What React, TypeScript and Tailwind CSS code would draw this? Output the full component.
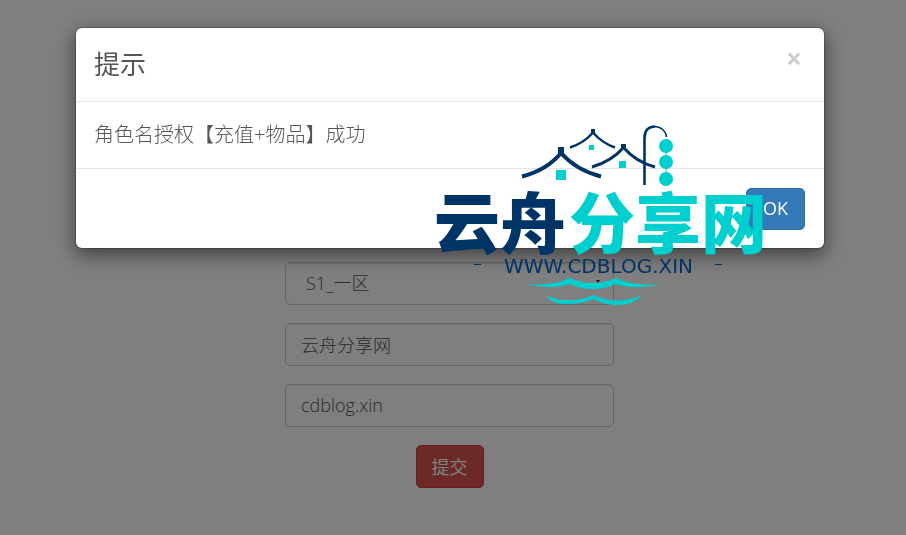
const controlClass =
  "block w-full h-[43px] rounded-[5px] border border-[#ccc] bg-white pb-[2px] text-lg font-light text-[#555] shadow-[inset_0_1px_1px_rgba(0,0,0,0.075)] outline-none";

function Logo() {
  return (
    <svg
      className="pointer-events-none absolute left-[430px] top-[120px] z-20"
      width="340"
      height="190"
      viewBox="430 120 340 190"
      role="img"
      aria-label="云舟分享网"
    >
      <g fill="none" stroke="#003366">
        <path d="M522 176.500Q547 170 561 153Q576 170 601 176.500" strokeWidth="4" />
        <path d="M570 147.500Q584 143 593 132.500Q602 143 615 147.500" strokeWidth="2.500" />
        <path d="M592 167Q612 161 623.500 147.500Q636 162 655 167" strokeWidth="3" />
        <path d="M644.500 185V138C644.500 130 649 126.500 655 126.500" strokeWidth="2.600" />
        <path d="M654 126.500C661 126.500 666 131 666.500 137" strokeWidth="1.500" />
      </g>
      <g fill="#003366">
        <path d="M558 147h6v7h-6zM591 129h4v5h-4zM621 144h5v5h-5z" />
        <path d="M474 264h7v1h-7zM715 264h7v1h-7z" />
      </g>
      <g fill="#00cfcf">
        <path d="M556 170h10v10h-10zM589 145h5v5h-5zM619 161h7v7h-7z" />
        <circle cx="666" cy="146" r="7" />
        <circle cx="666" cy="162" r="7" />
        <circle cx="666" cy="179" r="7" />
        <path d="M665.500 150h1v26h-1z" />
        <path d="M526 284Q556 286 569 278Q581 283 593 283Q605 283 616 278Q631 286 661 284.500Q630 290 616 284Q605 289 593 289Q581 289 569 284Q554 290 526 284Z" />
        <path d="M546 295Q555 300 567 300Q581 301 593.500 295Q606 301 619 300.500Q631 300 642 295Q634 305 617 305Q605 305 593.500 299Q582 304 566 304Q551 304 546 295Z" />
      </g>
      <g className="font-['Noto_Sans_CJK_SC',sans-serif] text-[66px] font-black">
        <text x="434" y="248" fill="#003366">云舟</text>
        <text x="569" y="248" fill="#00cfcf">分享网</text>
      </g>
      <text x="504" y="273" fill="#003366" className="font-['DejaVu_Sans',sans-serif] text-[20px]">
        WWW.CDBLOG.XIN
      </text>
    </svg>
  );
}

function AccountForm() {
  return (
    <form className="mx-auto flex w-[329px] flex-col items-center gap-[18px] pt-[262px]">
      <div className="relative w-full">
        <select aria-label="区服" className={`${controlClass} appearance-none px-5`}>
          <option>S1_一区</option>
        </select>
        <svg className="pointer-events-none absolute right-[14px] top-[18px]" width="4" height="3" viewBox="0 0 4 3">
          <path d="M0 0h4l-2 3z" fill="#333" />
        </svg>
      </div>
      <input aria-label="角色名" className={`${controlClass} px-[15px]`} defaultValue="云舟分享网" />
      <input aria-label="授权码" className={`${controlClass} px-[15px]`} defaultValue="cdblog.xin" />
      <button
        type="button"
        className="h-[43px] rounded-[5px] border border-[#d43f3a] bg-[#d9534f] px-[15px] text-lg text-white"
      >
        提交
      </button>
    </form>
  );
}

function Dialog() {
  return (
    <section
      role="dialog"
      aria-labelledby="dialog-title"
      className="mx-auto mt-[27px] w-full max-w-[750px] rounded-[7px] border border-black/20 bg-white bg-clip-padding text-[#555] shadow-[0_6px_19px_rgba(0,0,0,0.5)]"
    >
      <header className="flex items-center justify-between border-b border-[#e5e5e5] px-[18px] pt-[18px] pb-[19px]">
        <h4 id="dialog-title" className="text-[26px] leading-9">提示</h4>
        <button type="button" aria-label="关闭" className="px-1 pb-3 text-[28px] font-bold leading-6 text-black/20">
          ×
        </button>
      </header>
      <div className="px-[18px] py-[18px] text-xl leading-[30px] font-light">角色名授权【充值+物品】成功</div>
      <footer className="flex justify-end border-t border-[#e5e5e5] px-[19px] pt-[19px] pb-[18px]">
        <button
          type="button"
          className="h-[42px] rounded-[5px] border border-[#2e6da4] bg-[#337ab7] px-4 pb-[2px] text-lg text-white"
        >
          OK
        </button>
      </footer>
    </section>
  );
}

export default function App() {
  return (
    <div className="relative min-h-screen bg-white font-['Open_Sans','Noto_Sans_CJK_SC',sans-serif]">
      <main className="pr-[7px]">
        <AccountForm />
      </main>
      <div className="fixed inset-0 z-10 bg-black/50 pr-[6px]">
        <Dialog />
      </div>
      <Logo />
    </div>
  );
}
